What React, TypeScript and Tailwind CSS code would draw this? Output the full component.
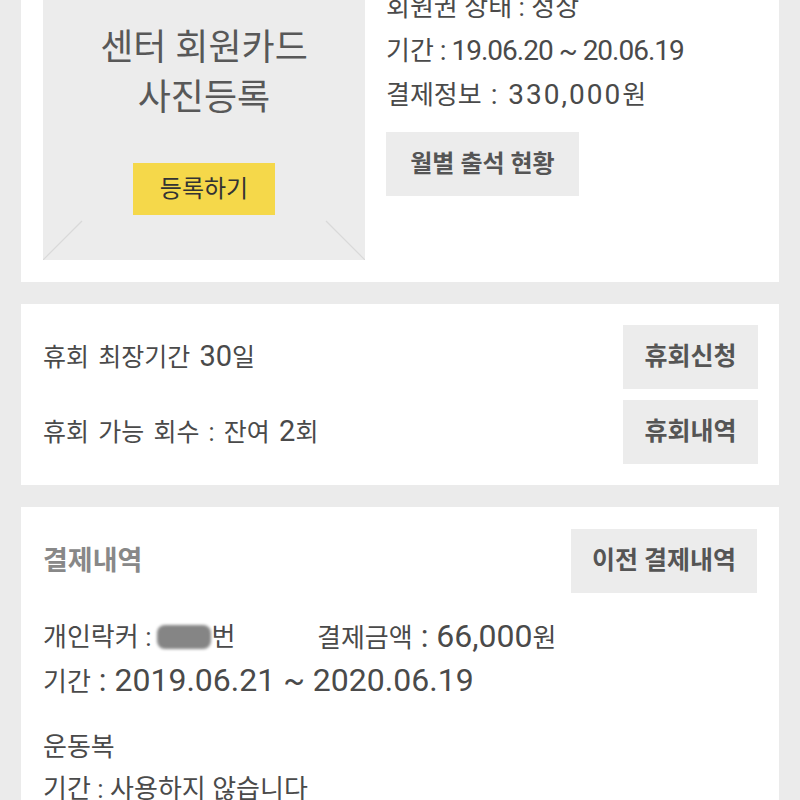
import React from 'react';

const font = { fontFamily: 'Roboto, "Noto Sans CJK KR", sans-serif' };

function GrayButton({ label, className = '' }: { label: string; className?: string }) {
  return (
    <button
      className={`h-[64px] bg-[#ececec] font-bold text-[#555] flex items-center justify-center ${className}`}
    >
      {label}
    </button>
  );
}

// 숫자 부분은 조금 크게
function Num({ children, className = 'text-[32px]' }: { children: React.ReactNode; className?: string }) {
  return <span className={className}>{children}</span>;
}

export default function App() {
  return (
    <div className="min-h-screen bg-[#ebebeb] px-[21px] overflow-hidden text-[#4a4a4a]" style={font}>
      <div className="-mt-[40px] flex flex-col gap-[22px] pb-[40px]">
        {/* 회원카드 */}
        <div className="bg-white p-[22px] flex gap-[21px]">
          <div className="relative w-[322px] h-[278px] bg-[#ececec] flex flex-col items-center">
            <div className="mt-[41px] text-center text-[36px] leading-[50px] text-[#585858]">
              <p>센터 회원카드</p>
              <p>사진등록</p>
            </div>
            <button className="mt-[40px] w-[142px] h-[52px] bg-[#f5d84a] text-[24px] text-[#333]">
              등록하기
            </button>
            <svg className="absolute left-0 bottom-0" width="40" height="40" viewBox="0 0 40 40">
              <line x1="0" y1="40" x2="39" y2="1" stroke="#d9d9d9" strokeWidth="1.2" />
            </svg>
            <svg className="absolute right-0 bottom-0" width="40" height="40" viewBox="0 0 40 40">
              <line x1="1" y1="1" x2="40" y2="40" stroke="#d9d9d9" strokeWidth="1.2" />
            </svg>
          </div>
          <div className="flex flex-col pt-[4px]">
            <div className="text-[26px] leading-[43px]">
              <p>회원권 상태 : 정상</p>
              <p>
                기간
                <Num className="text-[28px] tracking-[-1px]"> : 19.06.20 ~ 20.06.19</Num>
              </p>
              <p>
                결제정보<Num className="text-[28px] tracking-[2px]"> : 330,000</Num>원
              </p>
            </div>
            <GrayButton label="월별 출석 현황" className="mt-[15px] w-[193px] text-[24px]" />
          </div>
        </div>

        {/* 휴회 */}
        <div className="bg-white p-[21px] pl-[22px] flex flex-col gap-[11px]">
          <div className="flex items-center justify-between">
            <span className="text-[25px] leading-[42px] [word-spacing:3px]">
              휴회 최장기간 <Num className="text-[29px]">30</Num>일
            </span>
            <GrayButton label="휴회신청" className="w-[135px] text-[25px]" />
          </div>
          <div className="flex items-center justify-between">
            <span className="text-[25px] leading-[42px] [word-spacing:3px]">
              휴회 가능 회수 : 잔여 <Num className="text-[29px]">2</Num>회
            </span>
            <GrayButton label="휴회내역" className="w-[135px] text-[25px]" />
          </div>
        </div>

        {/* 결제내역 */}
        <div className="bg-white px-[22px] pt-[22px] pb-[30px]">
          <div className="flex items-center justify-between">
            <span className="text-[27px] font-bold text-[#888]">결제내역</span>
            <GrayButton label="이전 결제내역" className="w-[186px] text-[25px]" />
          </div>
          <div className="mt-[22px] text-[26px] leading-[42px]">
            <div className="flex">
              <span className="w-[274px] flex items-center">
                개인락커 :
                <span className="inline-block ml-[6px] w-[54px] h-[24px] rounded-[8px] bg-[#858585] blur-[1.5px]" />
                번
              </span>
              <span>
                결제금액<Num> : 66,000</Num>원
              </span>
            </div>
            <p>
              기간<Num> : 2019.06.21 ~ 2020.06.19</Num>
            </p>
          </div>
          <div className="mt-[23px] text-[26px] leading-[42px]">
            <p>운동복</p>
            <p>기간 : 사용하지 않습니다</p>
          </div>
        </div>
      </div>
    </div>
  );
}
